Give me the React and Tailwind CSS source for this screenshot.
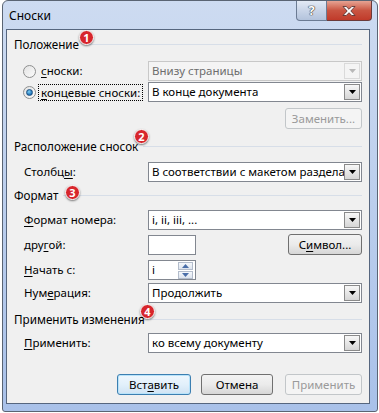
import React from 'react';

const font = "font-['Segoe_UI','Noto_Sans',sans-serif]";

function Key({ children }) {
  return <span className="underline underline-offset-[2px] decoration-1">{children}</span>;
}

function Badge({ n, className }) {
  return (
    <div
      className={`absolute w-[15px] h-[15px] rounded-full bg-[#d7262c] border border-white shadow-[0_1px_2px_rgba(0,0,0,0.5)] flex items-center justify-center text-white text-[11px] font-bold leading-none ${className}`}
    >
      {n}
    </div>
  );
}

function Heading({ children }) {
  return (
    <div className="flex items-center h-[16px] pl-[7px] pr-[7px]">
      <span className="whitespace-nowrap text-[11.7px]">{children}</span>
      <div className="flex-1 h-px bg-[#d7dee8] ml-[5px] -mt-[2px]" />
    </div>
  );
}

function Arrow({ disabled }) {
  return (
    <div
      className={`w-[16px] h-[16px] mr-[1px] flex items-center justify-center border ${
        disabled
          ? 'border-[#dadada] bg-[#f4f4f4]'
          : 'border-[#8a8a8a] bg-gradient-to-b from-[#f7f7f7] to-[#d6d6d6]'
      }`}
    >
      <svg width="7" height="4" viewBox="0 0 7 4">
        <path d="M0 0h7L3.5 4z" fill={disabled ? '#b8b8b8' : '#000'} />
      </svg>
    </div>
  );
}

function Select({ value, disabled }) {
  return (
    <div
      className={`w-[214px] h-[20px] flex items-center border ${
        disabled ? 'border-[#c8c8c8] bg-[#f4f4f4] text-[#6d6d6d]' : 'border-[#828790] bg-white text-black'
      }`}
    >
      <span className="flex-1 pl-[3px] whitespace-nowrap overflow-hidden">{value}</span>
      <Arrow disabled={disabled} />
    </div>
  );
}

function Button({ children, w, disabled, focused, className = '' }) {
  let look = 'border-[#707070] bg-gradient-to-b from-[#f3f3f3] via-[#ebebeb] to-[#d6d6d6] text-black';
  if (disabled) look = 'border-[#c2c6c9] bg-[#f4f4f4] text-[#9a9a9a]';
  if (focused)
    look =
      'border-[#3c7fb1] bg-gradient-to-b from-[#eef7fd] via-[#e2f0fb] to-[#cfe3f3] text-black shadow-[inset_0_0_0_1px_#b8e3fa]';
  return (
    <div className={`${w} h-[21px] rounded-[3px] border flex items-center justify-center ${look} ${className}`}>
      {children}
    </div>
  );
}

function Radio({ checked }) {
  return (
    <div className="w-[13px] h-[13px] rounded-full border border-[#8e8f8f] bg-gradient-to-br from-[#e3e3e3] to-[#fbfbfb] flex items-center justify-center">
      {checked && (
        <div className="w-[7px] h-[7px] rounded-full bg-[radial-gradient(circle_at_40%_35%,#7fd0f5,#1b6fb5_70%)] border border-[#1c4f80]" />
      )}
    </div>
  );
}

function Row({ label, children, className = '' }) {
  return (
    <div className={`flex items-center h-[20px] ${className}`}>
      <div className="w-[141px] pl-[17px] whitespace-nowrap">{label}</div>
      {children}
    </div>
  );
}

export default function App() {
  return (
    <div className={`w-[379px] h-[413px] bg-white ${font} text-[11.5px] text-black`}>
      <div className="ml-[2px] w-[376px] h-[412px] border border-[#5a6473] rounded-t-[6px] rounded-b-[3px] bg-gradient-to-b from-[#cddbf1] to-[#a9c1e9] flex flex-col">
        <div className="h-[28px] flex items-start pl-[6px] pr-[5px]">
          <span className="mt-[6px] text-[12px]">Сноски</span>
          <div className="flex-1" />
          <div className="w-[31px] h-[20px] border border-[#6b7b93] border-t-0 rounded-bl-[4px] bg-gradient-to-b from-[#e3eaf5] via-[#c9d5e8] to-[#b3c3dc] flex items-center justify-center">
            <span className="text-white font-bold text-[13px] leading-none [text-shadow:0_0_1px_#333,0_0_1px_#333,0_0_1px_#333]">?</span>
          </div>
          <div className="w-[45px] h-[20px] border border-[#6b3a3a] border-t-0 border-l-0 rounded-br-[4px] bg-gradient-to-b from-[#e6a393] via-[#c95441] to-[#c03a2a] flex items-center justify-center">
            <svg width="14" height="10" viewBox="0 0 14 10">
              <path
                d="M1 0.5h3.2L7 3.3 9.8 0.5H13L8.8 5 13 9.5H9.8L7 6.7 4.2 9.5H1L5.2 5z"
                fill="#fff"
                stroke="#4a2a2a"
                strokeWidth="0.8"
              />
            </svg>
          </div>
        </div>
        <div className="ml-[3px] w-[364px] h-[375px] border border-[#56667f] bg-[#f0f0f0] relative">
          <div className="pt-[7px]">
            <Heading>Положение</Heading>

            <div className="flex items-center h-[20px] mt-[8px]">
              <div className="w-[141px] pl-[16px] flex items-center">
                <Radio />
                <span className="ml-[5px]">
                  <Key>с</Key>носки:
                </span>
              </div>
              <Select value="Внизу страницы" disabled />
            </div>

            <div className="flex items-center h-[20px] mt-[1px]">
              <div className="w-[141px] pl-[16px] flex items-center">
                <Radio checked />
                <span className="ml-[2px] px-[2px] border border-dotted border-black leading-[15px]">
                  <Key>к</Key>онцевые сноски:
                </span>
              </div>
              <Select value="В конце документа" />
            </div>

            <div className="flex mt-[6px]">
              <Button w="w-[77px]" disabled className="ml-[278px]">
                Заменить...
              </Button>
            </div>

            <div className="mt-[10px]">
              <Heading>Расположение сносок</Heading>
            </div>

            <Row
              className="mt-[7px]"
              label={
                <>
                  Столбц<Key>ы</Key>:
                </>
              }
            >
              <Select value="В соответствии с макетом раздела" />
            </Row>

            <div className="mt-[6px]">
              <Heading>Формат</Heading>
            </div>

            <Row
              className="mt-[6px]"
              label={
                <>
                  <Key>Ф</Key>ормат номера:
                </>
              }
            >
              <Select value="i, ii, iii, ..." />
            </Row>

            <Row
              className="mt-[5px]"
              label={
                <>
                  дру<Key>г</Key>ой:
                </>
              }
            >
              <div className="w-[48px] h-[20px] border border-[#828790] bg-white" />
              <Button w="w-[74px]" className="ml-[92px] -mt-[1px]">
                С<Key>и</Key>мвол...
              </Button>
            </Row>

            <Row
              className="mt-[5px]"
              label={
                <>
                  <Key>Н</Key>ачать с:
                </>
              }
            >
              <div className="w-[48px] h-[20px] border border-[#828790] bg-white flex items-center">
                <span className="flex-1 pl-[3px]">i</span>
                <div className="flex flex-col mr-[2px] gap-px">
                  <div className="w-[15px] h-[8px] border border-[#b3bccb] bg-gradient-to-b from-[#f5f8fc] to-[#dde4ee] flex items-center justify-center">
                    <svg width="7" height="4" viewBox="0 0 7 4">
                      <path d="M0 4h7L3.5 0z" fill="#4a6ea9" />
                    </svg>
                  </div>
                  <div className="w-[15px] h-[8px] border border-[#b3bccb] bg-gradient-to-b from-[#f5f8fc] to-[#dde4ee] flex items-center justify-center">
                    <svg width="7" height="4" viewBox="0 0 7 4">
                      <path d="M0 0h7L3.5 4z" fill="#4a6ea9" />
                    </svg>
                  </div>
                </div>
              </div>
            </Row>

            <Row
              className="mt-[3px]"
              label={
                <>
                  Нум<Key>е</Key>рация:
                </>
              }
            >
              <Select value="Продолжить" />
            </Row>

            <div className="mt-[9px]">
              <Heading>Применить изменения</Heading>
            </div>

            <Row
              className="mt-[5px]"
              label={
                <>
                  <Key>П</Key>рименить:
                </>
              }
            >
              <Select value="ко всему документу" />
            </Row>

            <div className="flex mt-[21px]">
              <Button w="w-[74px]" focused className="ml-[110px]">
                Вст<Key>а</Key>вить
              </Button>
              <Button w="w-[72px]" className="ml-[10px]">
                Отмена
              </Button>
              <Button w="w-[77px]" disabled className="ml-[12px]">
                Применить
              </Button>
            </div>
          </div>

          <Badge n="1" className="left-[72px] top-[0px]" />
          <Badge n="2" className="left-[127px] top-[99px]" />
          <Badge n="3" className="left-[58px] top-[155px]" />
          <Badge n="4" className="left-[133px] top-[274px]" />
        </div>
      </div>
    </div>
  );
}
